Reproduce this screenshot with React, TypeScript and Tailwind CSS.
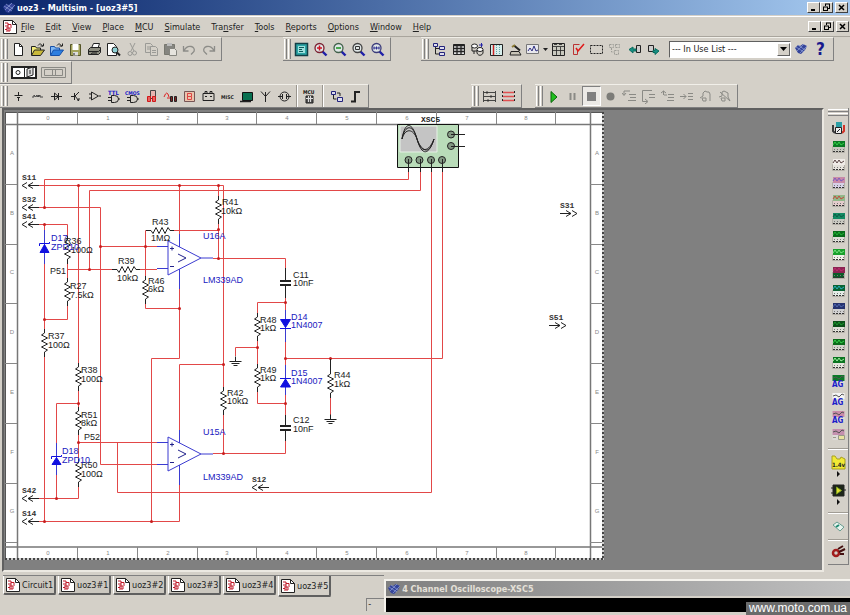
import type { ReactNode } from 'react'

type IconProps = { children: ReactNode; w?: number }

function Icon({ children, w = 15 }: IconProps) {
  return (
    <svg viewBox={`0 0 ${w} 15`} width={w} height={15} fill="none" stroke="#222" aria-hidden="true" className="shrink-0">
      {children}
    </svg>
  )
}

const magnifier = (inner: ReactNode, ring = '#3b3b7a') => (
  <Icon>
    <path d="M9.5 9.5l4 4" stroke="#1f1fa8" strokeWidth="2.4" />
    <circle cx="6.5" cy="6" r="4.5" fill="#dfe6e6" stroke={ring} strokeWidth="1.3" />
    {inner}
  </Icon>
)

const fileTools = [
  { label: 'New', icon: <Icon><path d="M3.5 1.5h5l3 3v9h-8z" fill="#fff" /><path d="M8.5 1.5v3h3" /></Icon> },
  {
    label: 'Open',
    icon: (
      <Icon>
        <path d="M1.5 13V4.5h4l1 1.5h4v2" fill="#f3ec7a" />
        <path d="M1.5 13.5l3-5.5h10l-4 5.5z" fill="#c9b93a" />
        <path d="M8 3.5c2-3 4-1 4.5 1M10.5 4h3V1.5" />
      </Icon>
    ),
  },
  {
    label: 'Open samples',
    icon: (
      <Icon>
        <path d="M1.5 13V4.5h4l1 1.5h4v2" fill="#7fb7f5" stroke="#1650a8" />
        <path d="M1.5 13.5l3-5.5h10l-4 5.5z" fill="#2d7fe0" stroke="#1650a8" />
        <path d="M8 3.5c2-3 4-1 4.5 1M10.5 4h3V1.5" />
      </Icon>
    ),
  },
  {
    label: 'Save',
    icon: (
      <Icon>
        <path d="M2.5 2.5h10v11h-10z" fill="#a3a35a" stroke="#555528" />
        <path d="M4.5 2h6v6h-6z" fill="#fff" stroke="none" />
        <path d="M5 10h5v3.5H5z" fill="#ddd" stroke="none" />
        <path d="M6 11v2" />
      </Icon>
    ),
  },
  {
    label: 'Print',
    icon: (
      <Icon>
        <path d="M4.5 6l2-4.5h6L11 6" fill="#fff" />
        <path d="M1.5 7.5l2-2h10v5l-2 2h-10z" fill="#8d8d80" />
        <path d="M1.5 9.5h10l2-2M4 12.5l1-1.5h5" />
      </Icon>
    ),
  },
  {
    label: 'Print preview',
    icon: (
      <Icon>
        <path d="M1.5 1.5h6l3 3v9h-9z" fill="#fff" />
        <circle cx="9" cy="8" r="3" fill="#8fd0d4" />
        <path d="M11 10.5l3 3" strokeWidth="2" />
      </Icon>
    ),
  },
  { label: 'Cut', icon: <Icon><g stroke="#9a9a96"><path d="M5 1l4 8M10 1L6 9" /><circle cx="5" cy="11.5" r="2" /><circle cx="9.5" cy="11" r="2" /></g></Icon> },
  {
    label: 'Copy',
    icon: (
      <Icon>
        <g stroke="#9a9a96">
          <path d="M1.5 1.5h5l2 2v7h-7zM3 5h4M3 7h4" />
          <path d="M6.5 4.5h5l2 2v7h-7z" fill="#d4d0c8" />
          <path d="M8 8.5h4M8 10.5h4" />
        </g>
      </Icon>
    ),
  },
  {
    label: 'Paste',
    icon: (
      <Icon>
        <path d="M1.5 2.5h10v10h-10z" fill="#858580" stroke="#77776f" />
        <path d="M4 1h5v3H4z" fill="#bbb" stroke="none" />
        <path d="M6.5 6.5h5l2 2v5h-7z" fill="#e6e4de" stroke="#85857f" />
      </Icon>
    ),
  },
  { label: 'Undo', icon: <Icon><path d="M1.5 4v5h5M2 8.5c4-7 12-4 10 1l-3 3" stroke="#8c8c88" strokeWidth="1.3" /></Icon> },
  { label: 'Redo', icon: <Icon><path d="M13.5 4v5h-5M13 8.5c-4-7-12-4-10 1l3 3" stroke="#8c8c88" strokeWidth="1.3" /></Icon> },
]

const viewTools = [
  {
    label: 'Toggle full screen',
    icon: (
      <Icon>
        <path d="M1.5 1.5h12v12h-12z" fill="#2ba5a5" stroke="#123f46" strokeWidth="1.5" />
        <path d="M4 4h7v7H4z" fill="#9ee0dd" stroke="none" />
        <path d="M5 5.5h5M5 7.5h3M5 9.5h4" stroke="#0c5a5a" />
      </Icon>
    ),
  },
  { label: 'Zoom in', icon: magnifier(<path d="M4 6h5M6.5 3.5v5" stroke="#d01020" strokeWidth="1.5" />, '#7a2030') },
  { label: 'Zoom out', icon: magnifier(<path d="M4 6h5" stroke="#16951c" strokeWidth="1.5" />, '#41604a') },
  { label: 'Zoom area', icon: magnifier(<path d="M4.5 4.5h4v3h-4z" stroke="#333" />, '#444') },
  { label: 'Zoom fit', icon: magnifier(<path d="M3.5 6h6M4 4.5v3M6.5 4.5v3M9 4.5v3" stroke="#2c2c90" />) },
]

const designTools = [
  { label: 'Project bar', icon: <Icon><path d="M1.5 1.5h4v3h-4zM7.5 4.5h5v3h-5zM7.5 10.5h5v3h-5z" fill="#dde" stroke="#23237c" /><path d="M3.5 5v7h4M3.5 6.5h4" /></Icon> },
  { label: 'Spreadsheet', icon: <Icon><path d="M2.5 2.5h11v10h-11z" fill="#ddd" /><path d="M2 3.5h12M2 6.5h12M2 9.5h12M6 2v11M10 2v11" strokeWidth="1.3" /></Icon> },
  { label: 'Database', icon: <Icon><ellipse cx="4.5" cy="4" rx="3" ry="2" fill="#fff" /><path d="M2 5v4h5M4 9v3" /><ellipse cx="10" cy="7.5" rx="3" ry="2" fill="#fff" /><path d="M7 8v3c1 3 5 3 6 0V8" /><path d="M9 3h4M11.5 1v4" stroke="#2424a8" /></Icon> },
  { label: 'Breadboard', icon: <Icon><path d="M1.5 2.5h12v11h-12z" fill="#d8efec" /><path d="M4.5 3v10" stroke="#c22" strokeWidth="1.5" /><path d="M7.5 3v10M10.5 3v10" stroke="#6aa" strokeDasharray="1 1" /></Icon> },
  { label: 'Create component', icon: <Icon><path d="M3 9.5h8l2 3.5H2z" fill="#c9c5b8" /><path d="M6 3.5l6 5" strokeWidth="2" /><path d="M4 5l3-2" stroke="#8b7a32" strokeWidth="2" /></Icon> },
  { label: 'Grapher', icon: <Icon w={24}><path d="M1.5 2.5h12v9h-12z" fill="#e8e8ee" stroke="#777" /><path d="M3 9l2-3 2 3 2-5 2 5 2-1" stroke="#2c2c80" /><path d="M18 6h5l-2.5 3z" fill="#222" stroke="none" /></Icon> },
  { label: 'Postprocessor', icon: <Icon><path d="M1.5 1.5h12v12h-12z" fill="#c9c9bf" /><path d="M2 4.5h11M5.5 5v8M9.5 5v8M2 8.5h11M3 2.5h3M8 2.5h3" strokeWidth=".8" /></Icon> },
  { label: 'Electrical rules check', icon: <Icon><path d="M3.5 8V2.5h6M3.5 8v4.5h4V8" stroke="#b33" /><path d="M6 6l2 3 6-7" stroke="#e01818" strokeWidth="1.5" /></Icon> },
  { label: 'Capture area', icon: <Icon><path d="M1.5 3.5h12v8h-12z" strokeDasharray="2 1" /></Icon> },
  { label: 'Go to parent sheet', icon: <Icon><path d="M1.5 2.5h4v3h-4zM7.5 2.5h4v3h-4zM6.5 8.5h4v4h-4zM3.5 6v4h3" stroke="#9c9c96" strokeDasharray="2 1" /></Icon> },
  { label: 'Back annotate', icon: <Icon><path d="M9.5 3.5h4v7h-4z" fill="#ccc" /><path d="M2 7.5L6 5v2h3v2H6v2z" fill="#168f83" stroke="#0b6c5f" /></Icon> },
  { label: 'Forward annotate', icon: <Icon><path d="M2.5 3.5h5v6h-5z" fill="#ccc" /><path d="M13 9L9 6.5v2H7v2h2v2z" fill="#168f83" stroke="#0b6c5f" /></Icon> },
]

const partTools = [
  { label: 'Source', icon: <Icon><path d="M3.5 6.5h8M7.5 3v3M7.5 9v3M6 8.5h3" /></Icon> },
  { label: 'Basic', icon: <Icon><path d="M2 8h2V6l1.5 2L7 6v2l1.5-2v2L10 6v2h3" stroke="#444" /></Icon> },
  { label: 'Diode', icon: <Icon><path d="M2 7.5h11M5.5 4v7l4-3.5zM9.5 4v7" /></Icon> },
  { label: 'Transistor', icon: <Icon><path d="M3 7.5h3M6.5 4v7M11 3L7 7l4 5M9 11h2v-2" /></Icon> },
  { label: 'Analog', icon: <Icon><path d="M4.5 3v8l7-4zM2 5h2M2 9h2M12 7h2" /></Icon> },
  { label: 'TTL', icon: <Icon><path d="M5.5 6.5h3q4 0 4 3.5t-4 3.5h-3zM2 8.5h3M2 11.5h3M12 10h2" /><text x="2" y="6" fontSize="6" fontWeight="700" fill="#2020c8" stroke="none">TTL</text></Icon> },
  { label: 'CMOS', icon: <Icon><path d="M5.5 6.5h3q4 0 4 3.5t-4 3.5h-3zM2 8.5h3M2 11.5h3M12 10h2" /><text x="0" y="6" fontSize="5" fontWeight="700" fill="#2020c8" stroke="none">CMOS</text></Icon> },
  { label: 'Misc digital', icon: <Icon><path d="M6.5 1.5h5v8h-5z" fill="#e7b5b0" stroke="#444" /><path d="M3.5 7.5h3v5h-3zM8.5 7.5h3v5h-3z" fill="#e86060" stroke="#d01818" /></Icon> },
  { label: 'Mixed', icon: <Icon><path d="M1 8q3-8 5 0M4 9h5" stroke="#d22" /><path d="M7.5 7.5h2v5h-2zM11.5 7.5h2v5h-2z" fill="#822" /></Icon> },
  { label: 'Indicator', icon: <Icon><path d="M2.5 2.5h10v10h-10z" fill="#eac3ad" stroke="#755" /><path d="M5.5 4.5h4v3h-4zv6h4v-3" stroke="#d44" /></Icon> },
  { label: 'Power', icon: <Icon><path d="M2 4.5h11v7H2zM4 4V2.5h2V4M9 4V2.5h2V4M4 7.5h2M9 7.5h2" /></Icon> },
  { label: 'Misc', icon: <Icon w={17}><text x="2" y="10" fontSize="5" fontWeight="700" fill="#222" stroke="none">MISC</text></Icon> },
  { label: 'Advanced peripherals', icon: <Icon><path d="M3.5 3.5h10v8h-10z" fill="#087050" stroke="#111" /><path d="M1 12.5h11" strokeWidth="1.5" /></Icon> },
  { label: 'RF', icon: <Icon><path d="M7.5 13V3M3 2.5l4.5 5 4.5-5" /></Icon> },
  { label: 'Electromechanical', icon: <Icon><circle cx="7.5" cy="7.5" r="4.5" /><path d="M1 7.5h4M10 7.5h4M5.5 5v5M9.5 5v5" /></Icon> },
]

const simTools = [
  { label: 'Run', icon: <Icon><path d="M5 2.5v11l6-5.5z" fill="#1fbf1f" stroke="#0b650b" /></Icon> },
  { label: 'Pause', icon: <Icon><path d="M5.5 4v7M9.5 4v7" stroke="#8a8a85" strokeWidth="2" /></Icon> },
  { label: 'Stop', icon: <Icon><path d="M3 3h9v9H3z" fill="#808080" stroke="none" /></Icon> },
  { label: 'Record', icon: <Icon><circle cx="7.5" cy="7.5" r="4" fill="#7c7c78" stroke="none" /></Icon> },
  { label: 'Step into', icon: <Icon><path d="M8 2H2v4M0 4l2 2.5L4 4M7 5.5h7M8 8.5h6M6 11.5h8" stroke="#8a8a85" /></Icon> },
  { label: 'Step over', icon: <Icon><path d="M11 1.5H1.5v11H6M4 10l3 2.5L4 15M8 5.5h6M8 8.5h6" stroke="#8a8a85" /></Icon> },
  { label: 'Step out', icon: <Icon><path d="M3.5 6V2M1 4l2.5-2L6 4M4 6h3M8 5.5h6M8 8.5h6M7 11.5h7" stroke="#8a8a85" /></Icon> },
  { label: 'Run to cursor', icon: <Icon><path d="M1 7.5h6M4.5 5L7 7.5 4.5 10M9 4.5h5M9 7.5h5M9 10.5h5" stroke="#8a8a85" /></Icon> },
  { label: 'Toggle breakpoint', icon: <Icon><path d="M2 9l3-2V4l2-2 2 1h2l1 2v7M4 9h4v3H5z" stroke="#8a8a85" /></Icon> },
  { label: 'Remove breakpoints', icon: <Icon><path d="M2 8l3-1V3l2-1 2 1 2 1v4l2 4M3 3l10 9M4 9h4v3H5z" stroke="#8a8a85" /></Icon> },
]

const menus = ['File', 'Edit', 'View', 'Place', 'MCU', 'Simulate', 'Transfer', 'Tools', 'Reports', 'Options', 'Window', 'Help']
const tabs = ['Circuit1', 'uoz3#1', 'uoz3#2', 'uoz3#3', 'uoz3#4', 'uoz3#5']

// screen colour, panel colour and trace colour of each instrument thumbnail
const instruments = [
  { label: 'Function generator', top: '#0b7a25', face: '#c8c8c0', trace: '#35d048' },
  { label: 'Wattmeter', top: '#f0ece8', face: '#e6e2dc', trace: '#5a4444' },
  { label: 'Oscilloscope', top: '#c98ba8', face: '#d6d0e6', trace: '#7b5cc0' },
  { label: 'Four channel oscilloscope', top: '#91b88a', face: '#e4cccc', trace: '#c44a3c' },
  { label: 'Bode plotter', top: '#138a63', face: '#c8c8c0', trace: '#0d5c44' },
  { label: 'Frequency counter', top: '#086b1b', face: '#deded8', trace: '#22b535' },
  { label: 'Word generator', top: '#18a02c', face: '#f0f0ea', trace: '#77e080' },
  { label: 'Logic converter', top: '#8c2452', face: '#0a5c28', trace: '#c02c70' },
  { label: 'Logic analyzer', top: '#0a6332', face: '#e4ece6', trace: '#28b0c0' },
  { label: 'IV analyzer', top: '#26336e', face: '#d0d0d0', trace: '#5068b0' },
  { label: 'Distortion analyzer', top: '#0c4f19', face: '#e0e0d8', trace: '#1c9b2d' },
  { label: 'Spectrum analyzer', top: '#0b6b1a', face: '#d4d4cc', trace: '#37d14a' },
  { label: 'Network analyzer', top: '#0b7520', face: '#e4e4dc', trace: '#a0f0a0' },
]

const brandInstruments = [
  { label: 'Agilent generator', top: '#0c7a28', text: true },
  { label: 'Agilent multimeter', top: '#f4f4f4', text: true },
  { label: 'Agilent oscilloscope', top: '#c98ba8', text: true },
  { label: 'Tektronix oscilloscope', top: '#c490ae', text: false },
]

function Grip() {
  return (
    <div className="mr-px flex gap-px py-px">
      <span className="w-[3px] border-l border-r border-l-white border-r-[#808080]" />
      <span className="w-[3px] border-l border-r border-l-white border-r-[#808080]" />
    </div>
  )
}

function Bar({ label, children }: { label: string; children: ReactNode }) {
  return (
    <div
      role="toolbar"
      aria-label={label}
      className="flex h-full items-stretch border-r border-b border-t border-t-[#f1efe9] border-r-[#808080] border-b-[#808080] pl-px pr-[3px]"
    >
      <Grip />
      {children}
    </div>
  )
}

function Tool({ label, pressed, children }: { label: string; pressed?: boolean; children: ReactNode }) {
  return (
    <button
      type="button"
      aria-label={label}
      className={`flex min-w-[19px] items-center justify-center ${
        pressed ? 'my-px border border-t-[#808080] border-l-[#808080] border-r-white border-b-white bg-[#eceae6]' : ''
      }`}
    >
      {children}
    </button>
  )
}

function Tools({ items }: { items: { label: string; icon: ReactNode }[] }) {
  return items.map((t) => (
    <Tool key={t.label} label={t.label} pressed={t.label === 'Stop'}>
      {t.icon}
    </Tool>
  ))
}

function WindowButtons() {
  const cls =
    'flex h-[11px] w-[13px] items-center justify-center border border-t-white border-l-white border-r-[#404040] border-b-[#404040] bg-[#d4d0c8]'
  return (
    <div className="flex">
      <button type="button" aria-label="Minimize" className={cls}>
        <svg viewBox="0 0 9 9" width="9" height="9"><path d="M2 7h4" stroke="#000" strokeWidth="2" /></svg>
      </button>
      <button type="button" aria-label="Restore" className={cls}>
        <svg viewBox="0 0 9 9" width="9" height="9" fill="none" stroke="#000"><path d="M3 1h5M3.5 1v2M7.5 1v4M6 5.5h2M1 4h5M1.5 4v4M5.5 4v4M1 7.5h5" /></svg>
      </button>
      <button type="button" aria-label="Close" className={`${cls} ml-[2px]`}>
        <svg viewBox="0 0 9 9" width="9" height="9"><path d="M2 2l5 5M7 2L2 7" stroke="#000" strokeWidth="1.5" /></svg>
      </button>
    </div>
  )
}

function SheetIcon() {
  return (
    <svg viewBox="0 0 14 14" width="14" height="14" fill="none" aria-hidden="true" className="shrink-0">
      <path d="M.5.5h9l4 4v9H.5z" fill="#fff" stroke="#222" />
      <path d="M9.5.5v4h4" stroke="#222" />
      <path d="M2 3h3v3H2M5 4.5h3V8M3 8h4v3H3M5 6v5M2 9.5h2" stroke="#c01828" />
    </svg>
  )
}

function ChipIcon() {
  return (
    <svg viewBox="0 0 13 12" width="13" height="12" aria-hidden="true" className="shrink-0">
      <path d="M0 5l3-3 2 1 3-2 4 2-2 4-4 4-3-1z" fill="#34449a" />
      <path d="M1 4l8 5M3 2l7 5M2 8l7-7M5 10l7-7" stroke="#9fb0e0" strokeWidth=".6" />
    </svg>
  )
}

function Resistor({ x, y, flat }: { x: number; y: number; flat?: boolean }) {
  return (
    <path
      d="M0-14v4l-3 2 6 3-6 3 6 3-6 3 6 3-3 2v5"
      transform={`translate(${x} ${y})${flat ? ' rotate(90)' : ''}`}
      stroke="#222"
    />
  )
}

function OpAmp({ x, y }: { x: number; y: number }) {
  return (
    <g transform={`translate(${x} ${y})`} stroke="#3b3bd0">
      <path d="M0-17v34l33-17zM-11-11.5H0M-11 10.5H0M33 0h12M11.5-24v13M11.5 11v20" />
      <path d="M10-4l8 4-8 4M2-9.5h4M4-11.5v4M2 8.5h4" stroke="#22228c" />
    </g>
  )
}

function Ground({ x, y }: { x: number; y: number }) {
  return <path d={`M${x} ${y - 5}v5m-6 0h12m-10 2h8m-6 2h4`} stroke="#222" />
}

const columns = [0, 1, 2, 3, 4, 5, 6, 7, 8]
const rows = ['A', 'B', 'C', 'D', 'E', 'F', 'G']

const resistors: [number, number][] = [
  [218.5, 210], [67.5, 250], [67.5, 292], [145.5, 290], [44.5, 343], [78.5, 377], [78.5, 421],
  [78.5, 473], [223.5, 401], [257.5, 327], [257.5, 378], [330.5, 384],
]

const blackText: [number, number, string][] = [
  [222, 205, 'R41'], [221, 214, '10kΩ'], [152, 225, 'R43'], [151, 241, '1MΩ'],
  [65, 244, 'R36'], [71, 253, '100Ω'], [50, 274, 'P51'], [118, 264, 'R39'], [117, 281, '10kΩ'],
  [148, 284, 'R46'], [148, 292, '6kΩ'], [70, 289, 'R27'], [70, 298, '7.5kΩ'], [48, 339, 'R37'],
  [48, 348, '100Ω'], [81, 373, 'R38'], [81, 382, '100Ω'], [81, 418, 'R51'], [81, 426, '8kΩ'],
  [84, 440, 'P52'], [81, 468, 'R50'], [81, 477, '100Ω'], [227, 396, 'R42'], [227, 404, '10kΩ'],
  [293, 278, 'C11'], [293, 286, '10nF'], [260, 323, 'R48'], [260, 331, '1kΩ'], [260, 373, 'R49'],
  [260, 381, '1kΩ'], [334, 378, 'R44'], [334, 387, '1kΩ'], [293, 423, 'C12'], [293, 432, '10nF'],
]

const blueText: [number, number, string][] = [
  [51, 241, 'D17'], [51, 250, 'ZPD10'], [203, 239, 'U16A'], [203, 283, 'LM339AD'],
  [291, 320, 'D14'], [291, 328, '1N4007'], [291, 376, 'D15'], [291, 384, '1N4007'],
  [62, 454, 'D18'], [62, 463, 'ZPD10'], [203, 435, 'U15A'], [203, 480, 'LM339AD'],
]

// x, baseline, name, direction of the off-page arrow
const ports: [number, number, string, 'in' | 'out'][] = [
  [22, 185, 'S11', 'in'], [22, 207, 'S32', 'in'], [22, 224, 'S41', 'in'], [22, 498, 'S42', 'in'],
  [22, 521, 'S14', 'in'], [252, 487, 'S12', 'in'], [560, 213, 'S31', 'out'], [549, 325, 'S51', 'out'],
]

const arrows = {
  in: 'M17 .5H6M5-2.5L0 .5l5 3M11-2.5L6 .5l5 3',
  out: 'M0 .5h11M6-2.5l5 3-5 3M12-2.5l5 3-5 3',
}

const junctions: [number, number][] = [
  [44, 207], [78, 185], [179, 185], [218, 185], [218, 229], [218, 258], [100, 246], [44, 319],
  [78, 403], [78, 442], [285, 302], [257, 347], [285, 358], [330, 358], [285, 403], [223, 364],
  [223, 453], [44, 521], [151, 521], [56, 498], [89, 269], [44, 224], [179, 308], [145, 246],
]

const wires = [
  'M38 185.5H223.5V388M223.5 415V453.5',
  'M38 207.5H100.5V464.5H157',
  'M44.5 207V179.5H408.5V172',
  'M38 224.5H67.5V236M44.5 224V230M44.5 264V329M44.5 357V521',
  'M67.5 264V278M67.5 306V319.5H44.5',
  'M67.5 269.5H113M139 269.5H157M89.5 269V190.5H420.5V172',
  'M78.5 185V363M78.5 391V407M78.5 435V459M78.5 487V498.5H38',
  'M100.5 246.5H157M145.5 276V230.5H148M171 230.5H218.5V224M218.5 230V258M218.5 185V196',
  'M145.5 304V308.5H179.5M179.5 289V358.5H151.5V521',
  'M179.5 185V234M213 258.5H285.5V268',
  'M285.5 298V310M285.5 302.5H257.5V313M257.5 341V364M257.5 347.5H235.5V356',
  'M257.5 392V403.5H285.5M285.5 342V365M285.5 395V415M285.5 441V453.5H213',
  'M285.5 358.5H442.5V172M330.5 398V416',
  'M223.5 364.5H179.5V430M179.5 484V521.5H38',
  'M78.5 403.5H56.5V443M56.5 475V498M78.5 442.5H157M117.5 442V492.5H431.5V172',
]

function Schematic() {
  return (
    <svg
      viewBox="5 112 601 451"
      width="601"
      height="451"
      fill="none"
      className="shrink-0 font-['Liberation_Sans',Arial,sans-serif]"
      role="img"
      aria-label="Circuit schematic uoz3#5"
    >
      <path d="M5 112h597v446H5z" fill="#fff" />
      <path d="M5.5 112v446M5 112.5h597" stroke="#555" />
      <path d="M17.5 112v446M5 124.5h597M590.5 112v446M5 547h597" stroke="#777" strokeWidth="1.5" />
      <path d="M603 112v448M5 559h598" stroke="#ccc" strokeWidth="2" />
      <path d="M603 112v448M5 559h598" stroke="#444" strokeWidth="2" strokeDasharray="2 2" />

      <g stroke="#888">
        {columns.map((c, i) => (
          <path key={c} d={`M${77.5 + Math.round(i * 59.8)} 112v12m0 423v11`} />
        ))}
        {rows.map((r, i) => (
          <path key={r} d={`M5 ${184.5 + Math.round(i * 59.7)}h12m573 0h12`} />
        ))}
      </g>
      <g fill="#888" fontSize="6" textAnchor="middle">
        {columns.map((c, i) => (
          <g key={c}>
            <text x={48 + Math.round(i * 59.8)} y="120">{c}</text>
            <text x={48 + Math.round(i * 59.8)} y="555">{c}</text>
          </g>
        ))}
        {rows.map((r, i) => (
          <g key={r}>
            <text x="12" y={155 + Math.round(i * 59.7)}>{r}</text>
            <text x="597" y={155 + Math.round(i * 59.7)}>{r}</text>
          </g>
        ))}
      </g>

      <path d={wires.join('')} stroke="#e24848" />
      <g fill="#c81e1e">
        {junctions.map(([x, y]) => (
          <circle key={`${x}-${y}`} cx={x + 0.5} cy={y + 0.5} r="1.5" />
        ))}
      </g>

      {resistors.map(([x, y]) => (
        <Resistor key={`${x}-${y}`} x={x} y={y} />
      ))}
      <Resistor x={126} y={269.5} flat />
      <Resistor x={160} y={230.5} flat />
      <OpAmp x={168} y={258} />
      <OpAmp x={168} y={454} />
      <Ground x={235.5} y={361.5} />
      <Ground x={330.5} y={419.5} />

      {/* capacitors */}
      <path d="M285.5 268v12M285.5 285v13M285.5 415v10M285.5 430v11M330.5 359v12" stroke="#222" />
      <path d="M280 281h11M280 285h11M280 426h11M280 430h11" stroke="#222" strokeWidth="2" />

      {/* diodes */}
      <path d="M44.5 230v34M56.5 443v32M285.5 310v32M285.5 365v30" stroke="#3b3bd0" />
      <g fill="#1010e0" stroke="#1010e0">
        <path d="M280.5 319.5h10l-5 8zM280 328.5h11" />
        <path d="M280.5 387h10l-5-8zM280 378.5h11" />
        <path d="M40 252.5h9l-4.5-8z" />
        <path d="M39.5 246v-2.5h10V242" fill="none" />
        <path d="M52 464.5h9l-4.5-7z" />
        <path d="M51.5 459v-2.5h10V455" fill="none" />
      </g>

      <g fontSize="9" fill="#1c1c1c">
        {blackText.map(([x, y, t]) => (
          <text key={`${x}-${y}`} x={x} y={y}>{t}</text>
        ))}
      </g>
      <g fontSize="9" fill="#2020c0">
        {blueText.map(([x, y, t]) => (
          <text key={`${x}-${y}`} x={x} y={y}>{t}</text>
        ))}
      </g>
      <g fontSize="8" className="font-['Liberation_Mono',monospace]">
        {ports.map(([x, y, t, dir]) => (
          <g key={t}>
            <text x={x} y={y - 5} fontWeight="700" fill="#333">{t}</text>
            <path d={arrows[dir]} transform={`translate(${x} ${y})`} stroke="#222" />
          </g>
        ))}
      </g>

      {/* XSC5 oscilloscope */}
      <path d="M397.5 124.5h61v43h-61z" fill="#b9dcb9" stroke="#111" />
      <path d="M400 126h37v26h-37z" fill="#c4c4c4" stroke="#e6f2e6" />
      <g stroke="#222">
        <path d="M402 139c3-18 10-18 15 0s12 16 17 0" />
        <path d="M402 139c3-15 11-15 15 0s12 13 17 0" />
        <path d="M402 139c3-11 11-11 15 0s12 18 17 0" />
      </g>
      <path d="M451 134.5h14M451 146.5h14" stroke="#222" />
      <g fill="#839983" stroke="#222">
        <circle cx="408.5" cy="160" r="3.5" />
        <circle cx="419.5" cy="160" r="3.5" />
        <circle cx="431" cy="160" r="3.5" />
        <circle cx="442" cy="160" r="3.5" />
        <circle cx="451" cy="134.5" r="3.5" />
        <circle cx="451" cy="146" r="3.5" />
      </g>
      <path d="M408.5 159v13M420.5 159v13M431.5 159v13M442.5 159v13M451 134.5h6M451 146.5h6" stroke="#222" />
      <text x="421" y="122" fontSize="8" fontWeight="700" fill="#222" className="font-['Liberation_Mono',monospace]">XSC5</text>
    </svg>
  )
}

function InstrumentBar() {
  return (
    <div
      role="toolbar"
      aria-label="Instruments"
      className="flex w-[21px] flex-col items-center border-b border-r border-b-[#808080] border-r-[#808080] pb-[5px]"
    >
      <div className="mb-[3px] mt-px flex w-full flex-col gap-px">
        <span className="h-[3px] border-y border-t-white border-b-[#808080]" />
        <span className="h-[3px] border-y border-t-white border-b-[#808080]" />
      </div>
      <button type="button" aria-label="Multimeter" className="flex h-[18px] w-[15px] shrink-0 items-center">
        <Icon>
          <path d="M5 1h6v5H5z" fill="#2b9fa5" stroke="none" />
          <path d="M2 4v6l2 2" stroke="#3a3a3a" strokeWidth="2" />
          <path d="M13 4v6l-2 2" stroke="#d23428" strokeWidth="2" />
          <path d="M4.5 6.5h6v6h-6z" fill="#eee" />
          <path d="M6 11l3-3" />
        </Icon>
      </button>
      {instruments.map((it) => (
        <button key={it.label} type="button" aria-label={it.label} className="flex h-[18px] w-[15px] shrink-0 items-center">
          <Icon>
            <path d="M1.5 7.5h12v6h-12z" fill={it.face} stroke="#b4b0a8" />
            <path d="M2 2h12v6H2z" fill={it.top} stroke="none" />
            <path d="M2 6l2-3 2 3 2-3 2 3 3-2" stroke={it.trace} />
            <path d="M3 10.5h10" stroke="#777" strokeDasharray="1 2" />
            <path d="M2 12.5h11" stroke="#333" strokeDasharray="2 1" />
          </Icon>
        </button>
      ))}
      {brandInstruments.map((it) => (
        <button key={it.label} type="button" aria-label={it.label} className="flex h-[18px] w-[15px] shrink-0 items-center">
          <Icon>
            <path d="M1.5 2h12v11h-12z" fill="#dedad8" stroke="none" />
            <path d="M1.5 2h12v6h-12z" fill={it.top} stroke="none" />
            <path d="M2 5l3-1 3 2 3-3 2 1" stroke="#555" />
            {it.text ? (
              <text x="1" y="14" fontSize="8" fontWeight="700" fill="#1c1cc8" stroke="none">AG</text>
            ) : (
              <path d="M2 10.5h3M7.5 8.5h6v4h-6z" fill="#e8e4a0" stroke="#998" />
            )}
          </Icon>
        </button>
      ))}
      <span className="mt-[5px] h-[2px] w-full shrink-0 border-t border-b border-t-[#a09c94] border-b-white" />
      <button type="button" aria-label="Measurement probe" className="mt-[5px] flex h-[28px] w-[15px] shrink-0 flex-col">
        <Icon><path d="M1 1h3l2 3h3l1-2 4 2v10H1z" fill="#f1ea35" stroke="#a8a020" /><text x="1" y="12" fontSize="6" fontWeight="700" fill="#222" stroke="none">1.4v</text></Icon>
        <Icon><path d="M6 1l3 3-3 3z" fill="#111" stroke="none" /></Icon>
      </button>
      <button type="button" aria-label="LabVIEW instrument" className="flex h-[28px] w-[15px] shrink-0 flex-col">
        <Icon><path d="M2 2h11v11H2z" fill="#1d2618" /><path d="M5.5 4v7l5-3.5z" fill="#dfe030" stroke="#7ea020" /><path d="M0 5h3M0 10h3M12 7h3" /></Icon>
        <Icon><path d="M6 1l3 3-3 3z" fill="#111" stroke="none" /></Icon>
      </button>
      <span className="mt-px h-[2px] w-full shrink-0 border-t border-b border-t-[#a09c94] border-b-white" />
      <button type="button" aria-label="Current probe" className="my-[5px] flex shrink-0">
        <Icon><path d="M2 6l4-3 7 5-4 4z" fill="#e8f4ee" stroke="#6a9c90" /><path d="M5 8l3-2" stroke="#1c8a70" strokeWidth="2" /></Icon>
      </button>
      <span className="h-[2px] w-full shrink-0 border-t border-b border-t-[#a09c94] border-b-white" />
      <button type="button" aria-label="Clamp probe" className="mt-[3px] flex shrink-0">
        <Icon><circle cx="5" cy="9" r="3" stroke="#a01c1c" strokeWidth="2.5" /><path d="M8 8l6-3M7 5l5-3M9 10h4" stroke="#441010" strokeWidth="2" /></Icon>
      </button>
    </div>
  )
}

export default function App() {
  return (
    <div className="flex h-screen flex-col overflow-hidden bg-[#d4d0c8] font-['DejaVu_Sans_Condensed','DejaVu_Sans',sans-serif] text-[9px] leading-[12px] text-[#222]">
      <header className="flex h-[15px] shrink-0 items-center bg-linear-to-r from-[#0c256b] to-[#a6caf0] pl-[3px] pr-[2px]">
        <ChipIcon />
        <h1 className="ml-px flex-1 text-[9px] font-bold text-white">uoz3 - Multisim - [uoz3#5]</h1>
        <WindowButtons />
      </header>

      <nav className="mt-px flex h-[21px] shrink-0 items-center gap-[11px] border-b border-t border-t-white border-b-[#a9a59d] pl-[3px] pr-px">
        <span className="-mr-[7px] flex"><SheetIcon /></span>
        {menus.map((m) => (
          <button key={m} type="button">
            {m === 'Transfer' ? <>Tra<u>n</u>sfer</> : <><u>{m[0]}</u>{m.slice(1)}</>}
          </button>
        ))}
        <span className="flex-1" />
        <WindowButtons />
      </nav>

      <div className="flex h-[24px] shrink-0">
        <Bar label="Standard"><Tools items={fileTools} /></Bar>
        <div className="w-[61px] shrink-0" />
        <Bar label="View"><Tools items={viewTools} /></Bar>
        <div className="w-[30px] shrink-0" />
        <Bar label="Main">
          <Tools items={designTools} />
          <div className="ml-[6px] flex">
            <select aria-label="In use list" className="h-[17px] w-[122px] appearance-none self-center border border-t-[#606060] border-l-[#606060] border-r-white border-b-white bg-white pl-[2px] text-[9px] leading-[12px]">
              <option>--- In Use List ---</option>
            </select>
            <span className="pointer-events-none -ml-[14px] flex h-[13px] w-[13px] items-center justify-center self-center border border-t-white border-l-white border-r-[#606060] border-b-[#606060] bg-[#d4d0c8]">
              <svg viewBox="0 0 7 4" width="7" height="4"><path d="M0 0h7L3.5 4z" /></svg>
            </span>
          </div>
          <span className="w-[2px]" />
          <Tool label="Education web page"><ChipIcon /></Tool>
          <Tool label="Help">
            <span className="text-[17px] leading-[17px] font-bold text-[#18188c]">?</span>
          </Tool>
        </Bar>
      </div>

      <div className="flex h-[23px] shrink-0">
        <Bar label="Simulation switch">
          <button type="button" aria-label="Simulation switch" className="ml-[2px] self-center">
            <svg viewBox="0 0 26 13" width="26" height="13" fill="none" stroke="#222" className="block">
              <path d="M1 1h24v11H1z" strokeWidth="2" fill="#fff" />
              <path d="M13.5 2v9M16 3l6-2v8l-6 2z" fill="#ddd" />
              <circle cx="7" cy="6.5" r="2" /><path d="M19 4v4" />
            </svg>
          </button>
          <button type="button" aria-label="Pause simulation" className="ml-[4px] mr-px self-center">
            <svg viewBox="0 0 26 13" width="26" height="13" fill="none" stroke="#8a8a85" className="block">
              <path d="M.5 1.5h24v10H.5zM3.5 3.5h18v6h-18zM11.5 4v5M14.5 4v5" />
            </svg>
          </button>
        </Bar>
      </div>

      <div className="flex h-[24px] shrink-0">
        <Bar label="Components">
          <Tools items={partTools} />
          <span className="mx-[2px] w-[2px] border-l border-r border-l-[#9a968e] border-r-white" />
          <Tool label="MCU"><Icon><path d="M4 7h7v7H4z" fill="#555" /><path d="M6.5 7v6M8.5 7v6M4 9.5h7" stroke="#ddd" /><text x="1" y="5" fontSize="5" fontWeight="700" fill="#111" stroke="none">MCU</text></Icon></Tool>
          <span className="mx-[3px] w-[2px] border-l border-r border-l-[#9a968e] border-r-white" />
          <Tool label="Hierarchical block"><Icon><path d="M2.5 2.5h4v3h-4zM8.5 8.5h5v4h-5z" fill="#dde" stroke="#23237c" /><path d="M8 4h3v3M4.5 6v4h3" /></Icon></Tool>
          <Tool label="Bus"><Icon><path d="M3 12.5h4V3h5" strokeWidth="2" /></Icon></Tool>
        </Bar>
        <div className="w-[102px] shrink-0" />
        <Bar label="Virtual">
          <Tool label="Ladder diagram"><Icon><path d="M1.5 2v11M13.5 2v11M2 3.5h11M2 7.5h11M2 11.5h11M5 2v3M9 6v3M6 10v3" strokeWidth=".8" /></Icon></Tool>
          <Tool label="Ladder rungs"><Icon><path d="M1.5 2v11M13.5 2v11" strokeDasharray="2 2" /><path d="M2 3.5h11M2 7.5h11M2 11.5h11" stroke="#e05050" strokeWidth="1.5" /></Icon></Tool>
        </Bar>
        <div className="w-[13px] shrink-0" />
        <Bar label="Simulation">
          <Tools items={simTools} />
        </Bar>
      </div>

      <div className="flex min-h-0 flex-1">
        <main className="ml-[2px] flex min-w-0 flex-1 overflow-hidden border-2 border-t-[#606060] border-l-[#606060] border-r-[#ece9e2] border-b-[#ece9e2] bg-[#808080] pl-px pt-[2px]">
          <Schematic />
        </main>
        <aside className="ml-[4px] mr-px flex items-start">
          <InstrumentBar />
        </aside>
      </div>

      <footer className="relative flex h-[43px] shrink-0 items-start pl-[3px]">
        <div role="tablist" className="mt-[3px] flex min-w-0 flex-1 items-start gap-[2px] border-t border-[#808080]">
          {tabs.map((t) => (
            <button
              key={t}
              type="button"
              role="tab"
              aria-selected={t === 'uoz3#5'}
              className={`flex w-[53px] shrink-0 items-center gap-[2px] rounded-b-[2px] border-b-2 border-l border-r-2 border-l-white border-r-[#606060] border-b-[#606060] pl-[2px] whitespace-nowrap ${
                t === 'uoz3#5' ? 'h-[21px]' : 'h-[19px] bg-[#cbc7bf]'
              }`}
            >
              <SheetIcon />
              {t}
            </button>
          ))}
          <span className="ml-auto mt-[22px] h-[13px] w-[18px] border-t border-l border-[#808080] pl-px leading-[11px]">-</span>
        </div>
        <section className="mt-[7px] w-[55%] border-t-2 border-l-2 border-[#f4f2ec]">
          <h2 className="flex h-[15px] items-center gap-px bg-linear-to-r from-[#808080] to-[#c0c0c0] px-[2px] text-[9px] font-bold text-[#e4e0d8]">
            <ChipIcon />
            4 Channel Oscilloscope-XSC5
          </h2>
          <div className="mt-[2px] h-[14px] bg-black" />
        </section>
        <span className="absolute right-0 bottom-0 bg-[#6b6b6b] px-[3px] font-['Liberation_Sans',Arial,sans-serif] text-[12px] leading-[13px] text-white">
          www.moto.com.ua
        </span>
      </footer>
    </div>
  )
}
